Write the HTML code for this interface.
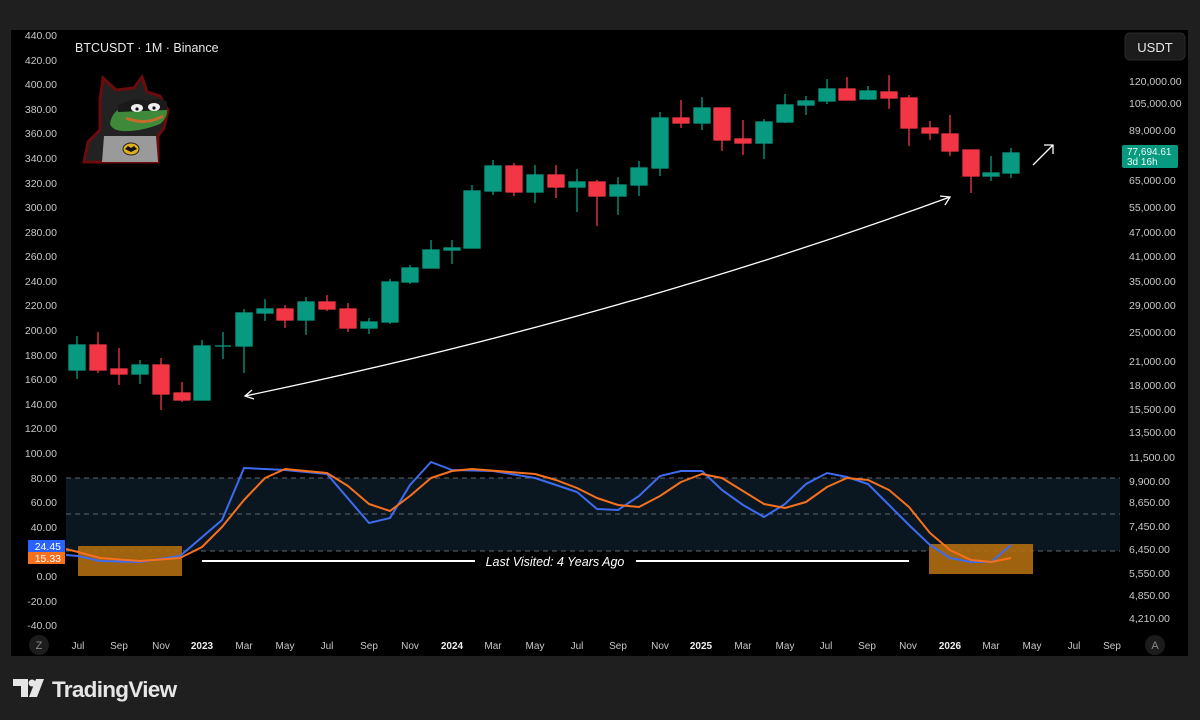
<!DOCTYPE html>
<html><head><meta charset="utf-8"><style>
html,body{margin:0;padding:0;background:#1f1f1f;width:1200px;height:720px;overflow:hidden}
svg{display:block}
text{font-family:"Liberation Sans",sans-serif}
</style></head><body>
<svg width="1200" height="720" viewBox="0 0 1200 720" xmlns="http://www.w3.org/2000/svg">
<rect width="1200" height="720" fill="#1f1f1f"/>
<rect x="11" y="30" width="1177" height="626" fill="#000"/>
<rect x="1125" y="33" width="60" height="27" rx="5" fill="#1c1c1c" stroke="#2a2a2a"/>
<text x="1155" y="52" fill="#e8e8e8" font-size="13" text-anchor="middle">USDT</text>
<text x="75" y="52" fill="#e8e8e8" font-size="12.5">BTCUSDT · 1M · Binance</text>

<g fill="#c8c8c8" font-size="10.5" text-anchor="end">
<text x="57" y="39">440.00</text><text x="57" y="64">420.00</text><text x="57" y="88">400.00</text><text x="57" y="113">380.00</text><text x="57" y="137">360.00</text><text x="57" y="162">340.00</text><text x="57" y="187">320.00</text><text x="57" y="211">300.00</text><text x="57" y="236">280.00</text><text x="57" y="260">260.00</text><text x="57" y="285">240.00</text><text x="57" y="309">220.00</text><text x="57" y="334">200.00</text><text x="57" y="359">180.00</text><text x="57" y="383">160.00</text><text x="57" y="408">140.00</text><text x="57" y="432">120.00</text><text x="57" y="457">100.00</text><text x="57" y="482">80.00</text><text x="57" y="506">60.00</text><text x="57" y="531">40.00</text><text x="57" y="580">0.00</text><text x="57" y="605">-20.00</text><text x="57" y="629">-40.00</text>
</g>
<rect x="28" y="540" width="37" height="12" fill="#2962ff"/>
<rect x="28" y="552" width="37" height="12" fill="#f7701d"/>
<text x="61" y="550" fill="#fff" font-size="10.5" text-anchor="end">24.45</text>
<text x="61" y="562" fill="#fff" font-size="10.5" text-anchor="end">15.33</text>

<g fill="#c8c8c8" font-size="10.5">
<text x="1129" y="85">120,000.00</text><text x="1129" y="107">105,000.00</text><text x="1129" y="134">89,000.00</text><text x="1129" y="184">65,000.00</text><text x="1129" y="211">55,000.00</text><text x="1129" y="236">47,000.00</text><text x="1129" y="260">41,000.00</text><text x="1129" y="285">35,000.00</text><text x="1129" y="309">29,000.00</text><text x="1129" y="336">25,000.00</text><text x="1129" y="365">21,000.00</text><text x="1129" y="389">18,000.00</text><text x="1129" y="413">15,500.00</text><text x="1129" y="436">13,500.00</text><text x="1129" y="461">11,500.00</text><text x="1129" y="485">9,900.00</text><text x="1129" y="506">8,650.00</text><text x="1129" y="530">7,450.00</text><text x="1129" y="553">6,450.00</text><text x="1129" y="577">5,550.00</text><text x="1129" y="599">4,850.00</text><text x="1129" y="622">4,210.00</text>
</g>
<rect x="1122" y="145" width="56" height="23" rx="2" fill="#089981"/>
<text x="1127" y="155" fill="#e8fff8" font-size="10">77,694.61</text>
<text x="1127" y="165" fill="#e8fff8" font-size="10">3d 16h</text>

<g fill="#c8c8c8" font-size="10" text-anchor="middle">
<text x="78" y="649">Jul</text><text x="119" y="649">Sep</text><text x="161" y="649">Nov</text><text x="202" y="649" font-weight="bold" fill="#eee">2023</text><text x="244" y="649">Mar</text><text x="285" y="649">May</text><text x="327" y="649">Jul</text><text x="369" y="649">Sep</text><text x="410" y="649">Nov</text><text x="452" y="649" font-weight="bold" fill="#eee">2024</text><text x="493" y="649">Mar</text><text x="535" y="649">May</text><text x="577" y="649">Jul</text><text x="618" y="649">Sep</text><text x="660" y="649">Nov</text><text x="701" y="649" font-weight="bold" fill="#eee">2025</text><text x="743" y="649">Mar</text><text x="785" y="649">May</text><text x="826" y="649">Jul</text><text x="867" y="649">Sep</text><text x="908" y="649">Nov</text><text x="950" y="649" font-weight="bold" fill="#eee">2026</text><text x="991" y="649">Mar</text><text x="1032" y="649">May</text><text x="1074" y="649">Jul</text><text x="1112" y="649">Sep</text>
</g>
<circle cx="39" cy="645" r="10" fill="#1c1c1c"/><text x="39" y="649" fill="#888" font-size="11" text-anchor="middle">Z</text>
<circle cx="1155" cy="645" r="10" fill="#1c1c1c"/><text x="1155" y="649" fill="#888" font-size="11" text-anchor="middle">A</text>

<rect x="66" y="478" width="1054" height="73" fill="#0a1620"/>
<g stroke="#787b86" stroke-dasharray="5 4" stroke-width="1" opacity="0.8">
<line x1="66" y1="478" x2="1120" y2="478"/><line x1="66" y1="514" x2="1120" y2="514"/><line x1="66" y1="551" x2="1120" y2="551"/>
</g>
<rect x="78" y="546" width="104" height="30" fill="#b06d10" opacity="0.9"/>
<rect x="929" y="544" width="104" height="30" fill="#b06d10" opacity="0.9"/>
<polyline fill="none" stroke="#3d6cf0" stroke-width="2" points="66,555 78,556 100,561 140,562 180,556 222,520 244,468 285,470 327,474 369,523 390,518 410,485 431,462 452,470 493,471 535,478 556,485 577,492 597,509 618,510 639,496 660,476 681,471 702,471 722,490 743,505 764,517 785,504 806,484 827,473 847,477 868,484 889,505 909,525 930,545 950,558 971,562 991,562 1011,545"/>
<polyline fill="none" stroke="#f7701d" stroke-width="2" stroke-linejoin="round" points="66,549 78,552 100,558 140,561 180,558 202,547 222,527 244,500 265,478 285,469 327,473 348,486 369,504 390,511 410,496 431,478 452,471 472,469 535,474 556,480 577,488 597,498 618,505 639,507 660,496 681,482 702,474 722,478 743,491 764,504 785,508 806,502 827,487 847,478 868,480 889,490 909,507 930,533 950,550 971,560 991,562 1011,558"/>
<line x1="202" y1="561" x2="475" y2="561" stroke="#fff" stroke-width="2"/>
<line x1="636" y1="561" x2="909" y2="561" stroke="#fff" stroke-width="2"/>
<text x="555" y="566" fill="#fff" font-size="12.5" font-style="italic" text-anchor="middle">Last Visited: 4 Years Ago</text>

<g stroke-width="1.3">
<g fill="#089981" stroke="#089981">
<line x1="77" y1="336" x2="77" y2="379"/><rect x="69" y="345" width="16" height="25"/>
<line x1="140" y1="360" x2="140" y2="384"/><rect x="132" y="365" width="16" height="9"/>
<line x1="202" y1="340" x2="202" y2="400"/><rect x="194" y="346" width="16" height="54"/>
<line x1="223" y1="332" x2="223" y2="359"/><line x1="215" y1="346" x2="231" y2="346"/>
<line x1="244" y1="309" x2="244" y2="373"/><rect x="236" y="313" width="16" height="33"/>
<line x1="265" y1="299" x2="265" y2="321"/><rect x="257" y="309" width="16" height="4"/>
<line x1="306" y1="297" x2="306" y2="335"/><rect x="298" y="302" width="16" height="18"/>
<line x1="369" y1="318" x2="369" y2="334"/><rect x="361" y="322" width="16" height="6"/>
<line x1="390" y1="279" x2="390" y2="324"/><rect x="382" y="282" width="16" height="40"/>
<line x1="410" y1="265" x2="410" y2="284"/><rect x="402" y="268" width="16" height="14"/>
<line x1="431" y1="240" x2="431" y2="268"/><rect x="423" y="250" width="16" height="18"/>
<line x1="452" y1="240" x2="452" y2="264"/><rect x="444" y="248" width="16" height="2"/>
<line x1="472" y1="185" x2="472" y2="248"/><rect x="464" y="191" width="16" height="57"/>
<line x1="493" y1="160" x2="493" y2="195"/><rect x="485" y="166" width="16" height="25"/>
<line x1="535" y1="165" x2="535" y2="203"/><rect x="527" y="175" width="16" height="17"/>
<line x1="577" y1="169" x2="577" y2="212"/><rect x="569" y="182" width="16" height="5"/>
<line x1="618" y1="177" x2="618" y2="215"/><rect x="610" y="185" width="16" height="11"/>
<line x1="639" y1="161" x2="639" y2="196"/><rect x="631" y="168" width="16" height="17"/>
<line x1="660" y1="112" x2="660" y2="176"/><rect x="652" y="118" width="16" height="50"/>
<line x1="702" y1="97" x2="702" y2="130"/><rect x="694" y="108" width="16" height="15"/>
<line x1="764" y1="119" x2="764" y2="159"/><rect x="756" y="122" width="16" height="21"/>
<line x1="785" y1="94" x2="785" y2="123"/><rect x="777" y="105" width="16" height="17"/>
<line x1="806" y1="96" x2="806" y2="115"/><rect x="798" y="101" width="16" height="4"/>
<line x1="827" y1="79" x2="827" y2="104"/><rect x="819" y="89" width="16" height="12"/>
<line x1="868" y1="86" x2="868" y2="100"/><rect x="860" y="91" width="16" height="8"/>
<line x1="991" y1="156" x2="991" y2="181"/><rect x="983" y="173" width="16" height="3"/>
<line x1="1011" y1="148" x2="1011" y2="178"/><rect x="1003" y="153" width="16" height="20"/>
</g>
<g fill="#f23645" stroke="#f23645">
<line x1="98" y1="332" x2="98" y2="373"/><rect x="90" y="345" width="16" height="25"/>
<line x1="119" y1="348" x2="119" y2="385"/><rect x="111" y="369" width="16" height="5"/>
<line x1="161" y1="358" x2="161" y2="410"/><rect x="153" y="365" width="16" height="29"/>
<line x1="182" y1="382" x2="182" y2="402"/><rect x="174" y="393" width="16" height="7"/>
<line x1="285" y1="305" x2="285" y2="328"/><rect x="277" y="309" width="16" height="11"/>
<line x1="327" y1="295" x2="327" y2="311"/><rect x="319" y="302" width="16" height="7"/>
<line x1="348" y1="303" x2="348" y2="332"/><rect x="340" y="309" width="16" height="19"/>
<line x1="514" y1="163" x2="514" y2="196"/><rect x="506" y="166" width="16" height="26"/>
<line x1="556" y1="165" x2="556" y2="198"/><rect x="548" y="175" width="16" height="12"/>
<line x1="597" y1="180" x2="597" y2="226"/><rect x="589" y="182" width="16" height="14"/>
<line x1="681" y1="100" x2="681" y2="128"/><rect x="673" y="118" width="16" height="5"/>
<line x1="722" y1="108" x2="722" y2="151"/><rect x="714" y="108" width="16" height="32"/>
<line x1="743" y1="120" x2="743" y2="155"/><rect x="735" y="139" width="16" height="4"/>
<line x1="847" y1="77" x2="847" y2="100"/><rect x="839" y="89" width="16" height="11"/>
<line x1="889" y1="75" x2="889" y2="109"/><rect x="881" y="92" width="16" height="6"/>
<line x1="909" y1="95" x2="909" y2="146"/><rect x="901" y="98" width="16" height="30"/>
<line x1="930" y1="121" x2="930" y2="140"/><rect x="922" y="128" width="16" height="5"/>
<line x1="950" y1="115" x2="950" y2="156"/><rect x="942" y="134" width="16" height="17"/>
<line x1="971" y1="150" x2="971" y2="193"/><rect x="963" y="150" width="16" height="26"/>
</g>
</g>

<g fill="none" stroke="#fff" stroke-width="1.3">
<path d="M245,396 Q620,318 950,197"/>
<path d="M252,390 L245,396 L254,399"/>
<path d="M940,196 L950,197 L945,205"/>
<path d="M1033,165 L1053,145 M1044,145 L1053,145 L1053,154"/>
</g>

<g>
<path d="M103,78 L116,90 L134,88 L142,77 L147,92 L160,96 L168,110 L164,128 L158,136 L158,162 L84,162 L88,142 L100,130 L100,100 Z" fill="#222" stroke="#6a0c0c" stroke-width="3"/>
<path d="M110,124 Q112,108 130,106 L166,104 Q170,116 160,124 Q140,132 122,131 Q112,130 110,124 Z" fill="#3e8a3a"/>
<path d="M118,106 Q132,96 148,101 Q160,96 167,102 L167,110 L118,112 Z" fill="#1a1a1a"/>
<ellipse cx="137" cy="108" rx="6" ry="4" fill="#eee"/><ellipse cx="154" cy="107" rx="6" ry="4" fill="#eee"/>
<circle cx="137" cy="109" r="1.6" fill="#111"/><circle cx="154" cy="108" r="1.6" fill="#111"/>
<path d="M126,118 Q145,126 163,116" stroke="#c46a2a" stroke-width="3" fill="none"/>
<path d="M104,136 L156,136 L158,162 L102,162 Z" fill="#9a9a9a"/>
<ellipse cx="131" cy="149" rx="8" ry="6" fill="#e0b020" stroke="#222"/>
<path d="M125,149 L128,146 L131,148 L134,146 L137,149 L131,152 Z" fill="#111"/>
</g>

<g fill="#e6e6e6">
<path d="M13,679 L28,679 L28,697 L21,697 L21,686 L13,686 Z"/>
<circle cx="32" cy="683" r="3.5"/>
<path d="M36,679 L44,679 L37,697 L29,697 Z"/>
</g>
<text x="52" y="697" fill="#e6e6e6" font-size="22.5" font-weight="bold" letter-spacing="-0.7">TradingView</text>
</svg>
</body></html>
